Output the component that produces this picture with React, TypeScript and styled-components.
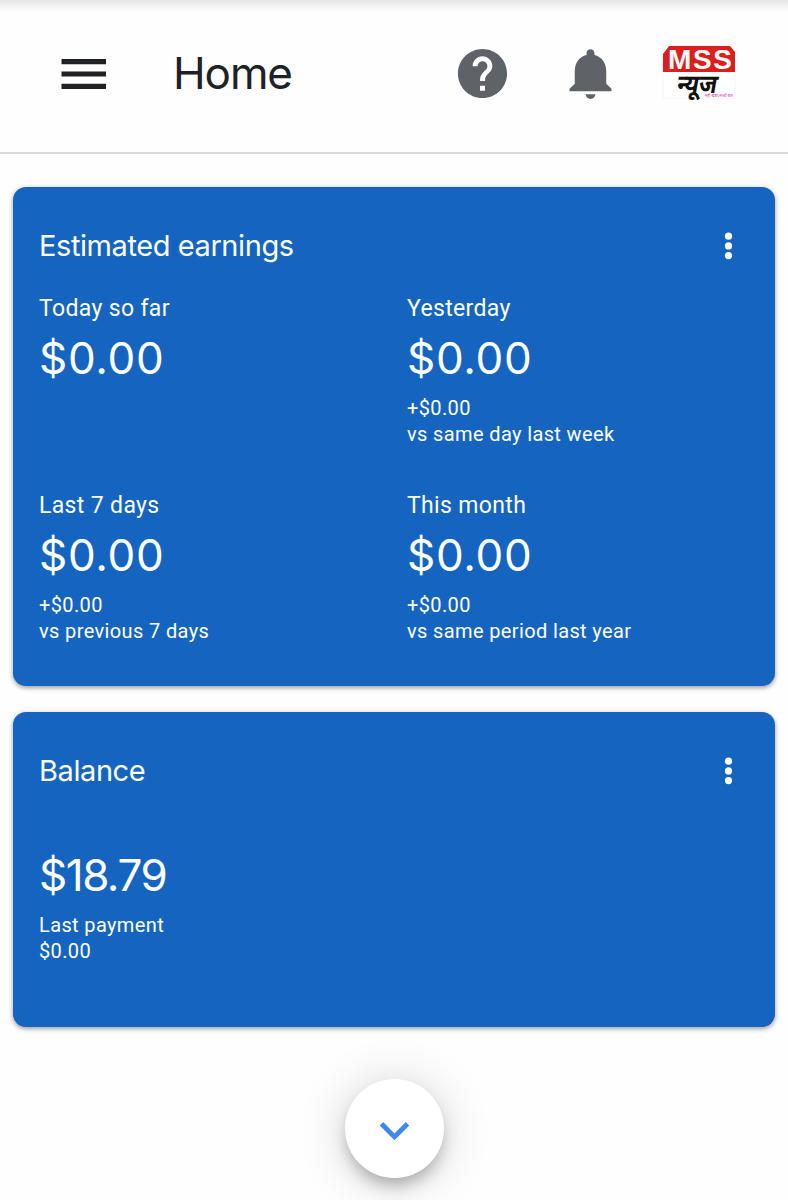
import React from "react";
import styled, { createGlobalStyle } from "styled-components";

const GlobalStyle = createGlobalStyle`
  * { box-sizing: border-box; }
  body { margin: 0; background: #fefefe; font-family: Roboto, "Liberation Sans", sans-serif; }
`;

const Page = styled.div`
  width: 788px;
  height: 1200px;
  overflow: hidden;
  display: flex;
  flex-direction: column;
`;

const Header = styled.header`
  height: 154px;
  flex: none;
  display: flex;
  align-items: center;
  padding: 0 52px 5px 54px;
  border-bottom: 2px solid #dadada;
  background: linear-gradient(#e4e4e4, #f4f4f4 6px, #fefefe 13px);
`;

const IconButton = styled.button<{ $w: number; $gap?: number }>`
  width: ${(p) => p.$w}px;
  height: 62px;
  margin: 0 ${(p) => p.$gap ?? 0}px 0 0;
  padding: 0;
  border: 0;
  background: none;
  display: flex;
  align-items: center;
  justify-content: center;
  color: #5f6368;
  svg { display: block; flex: none; fill: currentColor; }
`;

const MenuButton = styled(IconButton)`
  color: #202124;
`;

const AccountButton = styled(IconButton)`
  align-items: flex-start;
  svg { overflow: visible; }
`;

const PageTitle = styled.h1`
  flex: 1;
  margin: 0;
  padding-bottom: 2px;
  font: 400 44px/60px Inter, sans-serif;
  letter-spacing: -1.1px;
  color: #202124;
`;

const Main = styled.main`
  padding: 33px 13px 0;
  display: flex;
  flex-direction: column;
  gap: 26px;
`;

const Card = styled.section<{ $height: number }>`
  height: ${(p) => p.$height}px;
  padding: 40px 26px 0;
  border-radius: 13px;
  background: #1565c0;
  color: #fff;
  box-shadow: 0 2px 4px rgba(0, 0, 0, 0.3), 0 1px 6px rgba(0, 0, 0, 0.12);
`;

const CardHeader = styled.div`
  height: 38px;
  display: flex;
  align-items: center;
  justify-content: space-between;
  padding-right: 16px;
`;

const CardTitle = styled.h2`
  margin: 0;
  font: 400 29px/38px Inter, sans-serif;
  letter-spacing: -0.42px;
`;

const Metrics = styled.div`
  display: grid;
  grid-template-columns: 368px 1fr;
  grid-template-rows: 197px auto;
  padding-top: 29px;
`;

const Label = styled.div`
  font-size: 23px;
  line-height: 30px;
  letter-spacing: 0.35px;
`;

const Amount = styled.div<{ $tracking?: number }>`
  margin-top: 4px;
  font: 400 44px/60px Inter, sans-serif;
  letter-spacing: ${(p) => p.$tracking ?? 0.7}px;
`;

const Detail = styled.div`
  margin-top: 7px;
  font-size: 20px;
  line-height: 26.3px;
  letter-spacing: 0.37px;
  white-space: pre-line;
`;

const BalanceBody = styled.div`
  padding-top: 51px;
`;

const ScrollButton = styled.button`
  align-self: center;
  flex: none;
  width: 99px;
  height: 99px;
  margin-top: 52px;
  padding: 3px 0 0;
  border: 0;
  border-radius: 50%;
  background: #fff;
  color: #4285f4;
  display: flex;
  align-items: center;
  justify-content: center;
  box-shadow: 0 10px 16px -3px rgba(0, 0, 0, 0.26), 0 4px 48px rgba(0, 0, 0, 0.18);
  svg { display: block; fill: currentColor; }
`;

const MoreIcon = () => (
  <svg width="9" height="28" viewBox="0 0 9 28" fill="#fff">
    <circle cx="4.5" cy="4.2" r="3.6" />
    <circle cx="4.5" cy="13.9" r="3.6" />
    <circle cx="4.5" cy="23.6" r="3.6" />
  </svg>
);

const Logo = () => (
  <svg width="74" height="56" viewBox="0 0 74 56">
    <rect x="1" y="2" width="72" height="53" fill="#fff" stroke="#eee" strokeWidth="0.6" />
    <path d="M7 3H68L73 9V29H1V11Z" fill="#dc1f1c" />
    <text x="6" y="25.5" textLength="64" lengthAdjust="spacing" fontFamily="Liberation Sans, sans-serif" fontWeight="700" fontSize="28" fill="#fff">MSS</text>
    <text transform="translate(14 49.5) skewX(-10)" textLength="40" lengthAdjust="spacingAndGlyphs" fontFamily="Noto Sans, sans-serif" fontWeight="700" fontSize="26" fill="#111">न्यूज</text>
    <text x="43" y="53.5" textLength="28" lengthAdjust="spacingAndGlyphs" fontFamily="Noto Sans, sans-serif" fontSize="4.5" fill="#e23ba8">सही खबर,सच्ची बात</text>
  </svg>
);

interface Metric {
  label: string;
  amount: string;
  detail?: string;
}

const metrics: Metric[] = [
  { label: "Today so far", amount: "$0.00" },
  { label: "Yesterday", amount: "$0.00", detail: "+$0.00\nvs same day last week" },
  { label: "Last 7 days", amount: "$0.00", detail: "+$0.00\nvs previous 7 days" },
  { label: "This month", amount: "$0.00", detail: "+$0.00\nvs same period last year" },
];

export default function App() {
  return (
    <Page>
      <GlobalStyle />
      <Header>
        <MenuButton $w={60} $gap={59} aria-label="Menu">
          <svg width="46" height="30" viewBox="0 0 46 30">
            <path d="M.5 0h44.5v5.2H.5zM.5 12.4h44.5v5.2H.5zM.5 24.8h44.5V30H.5z" />
          </svg>
        </MenuButton>
        <PageTitle>Home</PageTitle>
        <IconButton $w={60} $gap={46.5} aria-label="Help">
          <svg width="59" height="59" viewBox="0 0 24 24">
            <path d="M12 2C6.48 2 2 6.48 2 12s4.48 10 10 10 10-4.48 10-10S17.52 2 12 2zm1 17h-2v-2h2v2zm2.07-7.75-.9.92C13.45 12.9 13 13.5 13 15h-2v-.5c0-1.1.45-2.1 1.17-2.83l1.24-1.26c.37-.36.59-.86.59-1.41 0-1.1-.9-2-2-2s-2 .9-2 2H8c0-2.21 1.79-4 4-4s4 1.79 4 4c0 .88-.36 1.68-.93 2.25z" />
          </svg>
        </IconButton>
        <IconButton $w={62} $gap={41} aria-label="Notifications">
          <svg width="63" height="61" viewBox="0 0 24 24" preserveAspectRatio="none">
            <path d="M12 22c.9 0 1.7-.6 1.9-1.8h-3.8c.2 1.2 1 1.8 1.9 1.8zm6-6v-5c0-3.07-1.64-5.64-4.5-6.32V4c0-.83-.67-1.5-1.5-1.5s-1.5.67-1.5 1.5v.68C7.63 5.36 6 7.92 6 11v5l-2 2v1h16v-1l-2-2z" />
          </svg>
        </IconButton>
        <AccountButton $w={74} aria-label="Account">
          <Logo />
        </AccountButton>
      </Header>
      <Main>
        <Card $height={499}>
          <CardHeader>
            <CardTitle>Estimated earnings</CardTitle>
            <MoreIcon />
          </CardHeader>
          <Metrics>
            {metrics.map((m) => (
              <div key={m.label}>
                <Label>{m.label}</Label>
                <Amount>{m.amount}</Amount>
                {m.detail && <Detail>{m.detail}</Detail>}
              </div>
            ))}
          </Metrics>
        </Card>
        <Card $height={315}>
          <CardHeader>
            <CardTitle>Balance</CardTitle>
            <MoreIcon />
          </CardHeader>
          <BalanceBody>
            <Amount $tracking={-1.5}>$18.79</Amount>
            <Detail>{"Last payment\n$0.00"}</Detail>
          </BalanceBody>
        </Card>
      </Main>
      <ScrollButton aria-label="Scroll down">
        <svg width="59" height="59" viewBox="0 0 24 24">
          <path d="M16.59 8.59 12 13.17 7.41 8.59 6 10l6 6 6-6z" />
        </svg>
      </ScrollButton>
    </Page>
  );
}
